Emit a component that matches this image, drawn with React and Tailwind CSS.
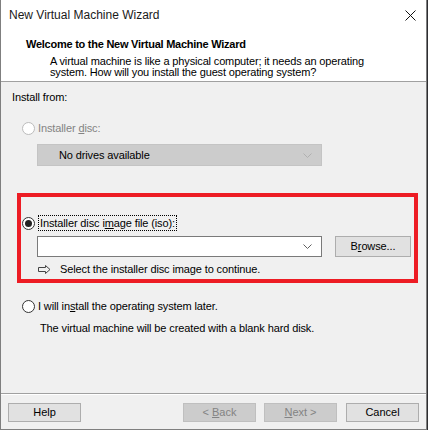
import React from 'react';

const font = { fontFamily: '"Liberation Sans", Arial, sans-serif' };

function Radio({ checked, disabled }) {
  return (
    <span
      className={`flex items-center justify-center w-[13px] h-[13px] rounded-full border bg-white shrink-0 ${
        disabled ? 'border-[#bcbcbc]' : 'border-[#333333]'
      }`}
    >
      {checked && <span className="w-[7px] h-[7px] rounded-full bg-[#222222]" />}
    </span>
  );
}

function Chevron({ color }) {
  return (
    <svg width="9" height="5" viewBox="0 0 9 5" className="shrink-0">
      <path d="M0.5 0.5 L4.5 4.5 L8.5 0.5" fill="none" stroke={color} strokeWidth="1" />
    </svg>
  );
}

function Button({ children, disabled, className = '' }) {
  return (
    <div
      className={`w-[73px] h-[19px] flex items-center justify-center border text-[11px] ${
        disabled ? 'bg-[#cccccc] border-[#bfbfbf] text-[#838383]' : 'bg-[#e1e1e1] border-[#adadad] text-black'
      } ${className}`}
    >
      <span>{children}</span>
    </div>
  );
}

export default function App() {
  return (
    <div className="w-[428px] h-[430px] bg-[#2d2d30] flex" style={font}>
      <div className="w-[427px] h-[430px] flex flex-col bg-[#f0f0f0] border-l border-r border-b border-[#7f7f7f] text-black">
        {/* title bar */}
        <div className="h-[30px] bg-white flex items-center justify-between pl-[8px] pr-[10px] shrink-0">
          <span className="text-[12px] text-[#1a1a1a]">New Virtual Machine Wizard</span>
          <svg width="11" height="11" viewBox="0 0 11 11">
            <path d="M0.5 0.5 L10.5 10.5 M10.5 0.5 L0.5 10.5" stroke="#111" strokeWidth="1" />
          </svg>
        </div>

        {/* header */}
        <div className="h-[52px] bg-white border-b border-[#a0a0a0] pl-[25px] pt-[8px] shrink-0">
          <div className="text-[11px] font-bold leading-[13px] tracking-[-0.25px]">
            Welcome to the New Virtual Machine Wizard
          </div>
          <div className="pl-[24px] pt-[5px] text-[11px] leading-[11px] tracking-[-0.15px]">
            <div>A virtual machine is like a physical computer; it needs an operating</div>
            <div>system. How will you install the guest operating system?</div>
          </div>
        </div>

        {/* body */}
        <div className="flex-1 flex flex-col text-[11px] tracking-[-0.12px] border-b border-[#a0a0a0]">
          <div className="pl-[11px] pt-[8px] leading-[14px]">Install from:</div>

          <div className="pl-[21px] mt-[17px] flex items-center gap-[3px] h-[14px] text-[#838383]">
            <Radio disabled />
            <span>
              Installer <span className="underline">d</span>isc:
            </span>
          </div>

          <div className="ml-[36px] mt-[9px] w-[285px] h-[22px] bg-[#cccccc] border border-[#c4c4c4] flex items-center justify-between pl-[21px] pr-[9px]">
            <span>No drives available</span>
            <Chevron color="#b0b0b0" />
          </div>

          {/* highlighted option */}
          <div className="ml-[16px] mt-[27px] w-[401px] h-[90px] border-[4px] border-[#ed1c24] flex flex-col">
            <div className="pl-[1px] mt-[18px] flex items-center gap-[3px] h-[16px]">
              <Radio checked />
              <span className="border border-dotted border-black px-[1px] leading-[14px]">
                Installer disc i<span className="underline">m</span>age file (iso):
              </span>
            </div>
            <div className="flex items-center mt-[5px] pl-[16px]">
              <div className="w-[285px] h-[21px] bg-white border border-[#7a7a7a] flex items-center justify-end pr-[9px]">
                <Chevron color="#606060" />
              </div>
              <Button className="ml-[13px] h-[21px] w-[76px]">
                B<span className="underline">r</span>owse...
              </Button>
            </div>
            <div className="flex items-center pl-[17px] mt-[5px] h-[14px] gap-[9px]">
              <svg width="13" height="9" viewBox="0 0 13 9" className="shrink-0">
                <path d="M0.5 2.5 H7.5 V0.5 L12 4.5 L7.5 8.5 V6.5 H0.5 Z" fill="none" stroke="#444" strokeWidth="1" />
              </svg>
              <span>Select the installer disc image to continue.</span>
            </div>
          </div>

          <div className="pl-[21px] mt-[16px] flex items-center gap-[3px] h-[14px]">
            <Radio />
            <span>
              I will in<span className="underline">s</span>tall the operating system later.
            </span>
          </div>
          <div className="pl-[39px] mt-[8px] leading-[14px]">
            The virtual machine will be created with a blank hard disk.
          </div>
        </div>

        {/* footer */}
        <div className="h-[35px] border-t border-white flex items-start pt-[8px] px-[7px] shrink-0">
          <Button>Help</Button>
          <div className="flex-1" />
          <Button disabled>
            &lt; <span className="underline">B</span>ack
          </Button>
          <Button disabled className="ml-[8px]">
            <span className="underline">N</span>ext &gt;
          </Button>
          <Button className="ml-[9px]">Cancel</Button>
        </div>
      </div>
    </div>
  );
}
